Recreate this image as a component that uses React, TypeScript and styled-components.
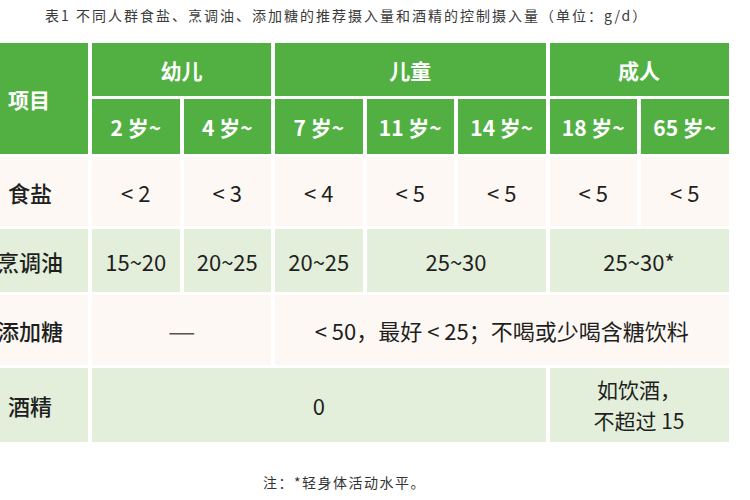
import React from "react";
import styled, { createGlobalStyle } from "styled-components";

const Global = createGlobalStyle`
  html, body { margin: 0; padding: 0; background: #ffffff; }
  body { width: 750px; height: 500px; overflow: hidden; font-family: "Noto Sans CJK SC", "Noto Sans", sans-serif; }
`;

const Page = styled.div`
  width: 750px;
  height: 500px;
  overflow: hidden;
  display: flex;
  flex-direction: column;
`;

const Title = styled.div`
  padding: 5px 0 0 45px;
  height: 43px;
  box-sizing: border-box;
  font-size: 14px;
  letter-spacing: 2px;
  line-height: 20px;
  color: #3a3a3a;
  white-space: nowrap;
`;

const Table = styled.div`
  margin-left: -30px;
  display: grid;
  grid-template-columns: 118px repeat(7, 87.5px);
  grid-template-rows: 53px 55px 69px 63px 70px 74px;
  gap: 3px 4px;
  background: #ffffff;
`;

type Tone = "head" | "cream" | "green";

const Cell = styled.div<{ $tone: Tone; $span?: number; $rows?: number; $label?: boolean }>`
  grid-column: span ${(p) => p.$span ?? 1};
  grid-row: span ${(p) => p.$rows ?? 1};
  display: flex;
  align-items: center;
  justify-content: center;
  text-align: center;
  white-space: nowrap;
  background: ${(p) =>
    p.$tone === "head" ? "#52b043" : p.$tone === "green" ? "#e3efda" : "#fdf8f3"};
  color: ${(p) => (p.$tone === "head" ? "#ffffff" : "#1f1f1f")};
  font-weight: ${(p) => (p.$tone === "head" ? 700 : 400)};
  font-size: ${(p) => (p.$tone === "head" ? "21px" : "22px")};
  ${(p) => (p.$label && p.$tone !== "head" ? "font-weight: 500; padding-left: 2px;" : "")}
`;

const TwoLine = styled.div`
  line-height: 31px;
  font-size: 21px;
`;

const Dash = styled.span`
  color: #555;
  font-size: 22px;
  transform: scaleX(1.4);
  display: inline-block;
`;

const Note = styled.div`
  padding: 30px 0 0 263px;
  font-size: 14px;
  letter-spacing: 1.5px;
  color: #333;
  white-space: nowrap;
`;

const ages = ["2 岁~", "4 岁~", "7 岁~", "11 岁~", "14 岁~", "18 岁~", "65 岁~"];

export default function App() {
  return (
    <Page>
      <Global />
      <Title>表1 不同人群食盐、烹调油、添加糖的推荐摄入量和酒精的控制摄入量（单位：g/d）</Title>
      <Table>
        <Cell $tone="head" $rows={2} $label>项目</Cell>
        <Cell $tone="head" $span={2}>幼儿</Cell>
        <Cell $tone="head" $span={3}>儿童</Cell>
        <Cell $tone="head" $span={2}>成人</Cell>
        {ages.map((a) => (
          <Cell key={a} $tone="head">{a}</Cell>
        ))}

        <Cell $tone="cream" $label>食盐</Cell>
        {["< 2", "< 3", "< 4", "< 5", "< 5", "< 5", "< 5"].map((v, i) => (
          <Cell key={i} $tone="cream">{v}</Cell>
        ))}

        <Cell $tone="green" $label>烹调油</Cell>
        <Cell $tone="green">15~20</Cell>
        <Cell $tone="green">20~25</Cell>
        <Cell $tone="green">20~25</Cell>
        <Cell $tone="green" $span={2}>25~30</Cell>
        <Cell $tone="green" $span={2}>25~30*</Cell>

        <Cell $tone="cream" $label>添加糖</Cell>
        <Cell $tone="cream" $span={2}><Dash>—</Dash></Cell>
        <Cell $tone="cream" $span={5}>&lt; 50，最好 &lt; 25；不喝或少喝含糖饮料</Cell>

        <Cell $tone="green" $label>酒精</Cell>
        <Cell $tone="green" $span={5}>0</Cell>
        <Cell $tone="green" $span={2}>
          <TwoLine>
            如饮酒，
            <br />
            不超过 15
          </TwoLine>
        </Cell>
      </Table>
      <Note>注：*轻身体活动水平。</Note>
    </Page>
  );
}
